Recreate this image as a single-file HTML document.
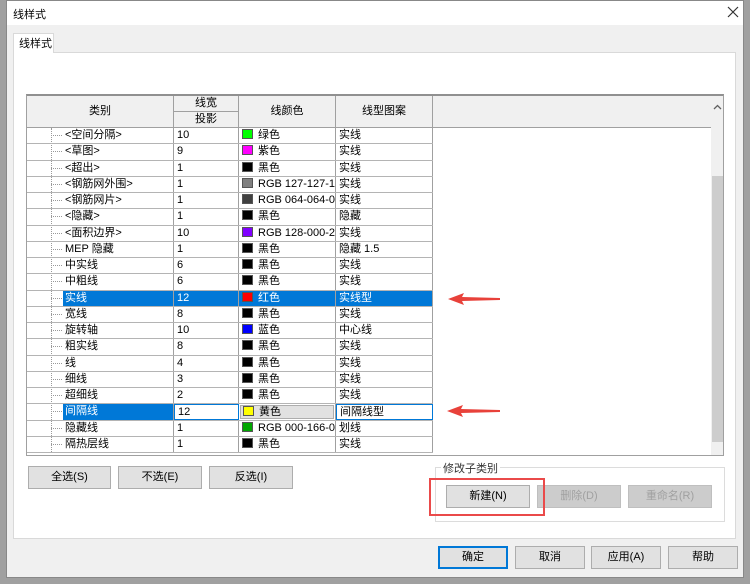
<!DOCTYPE html>
<html><head><meta charset="utf-8"><style>
*{box-sizing:border-box;margin:0;padding:0}
body{width:750px;height:584px;background:#a0a0a0;font-family:"Liberation Sans","Noto Sans CJK SC",sans-serif;font-size:11px;color:#000;position:relative;overflow:hidden}
.abs{position:absolute}
.win{left:6px;top:0;width:738px;height:578px;background:#f0f0f0;border:1px solid #888}
.title{left:7px;top:1px;width:736px;height:24px;background:#fff}
.panel{left:13px;top:52px;width:723px;height:487px;background:#fff;border:1px solid #d9d9d9}
.tab{left:13px;top:33px;width:41px;height:20px;background:#fff;border:1px solid #d9d9d9;border-bottom:none;padding:1px 0 0 5px}
.grid{left:26px;top:94px;width:698px;height:362px;border:1px solid #a0a0a0;border-top:2px solid #909090;background:#fff;overflow:hidden}
.hd{position:absolute;top:0;height:32px;background:#f0f0f0;border-right:1px solid #a0a0a0;border-bottom:1px solid #a0a0a0;text-align:center}
.row{position:absolute;left:0;width:406px;height:16.25px;border-bottom:1px solid #b4b4b4}
.c{position:absolute;top:0;height:100%;border-right:1px solid #a0a0a0;line-height:15px;white-space:nowrap;overflow:hidden;padding-left:3px}
.c0{left:0;width:147px;padding-left:38px}
.c1{left:147px;width:65px}
.c2{left:212px;width:97px}
.c3{left:309px;width:97px}
.dots{position:absolute;left:24px;top:7px;width:11px;border-top:1px dotted #999}
.sw{display:inline-block;width:11px;height:10px;vertical-align:-1px;margin-right:5px;border:1px solid #555}
.sel .c0 span,.sel .c1,.sel .c2,.sel .c3{background:#0078d7;color:#fff}
.btn{position:absolute;height:23px;background:#e1e1e1;border:1px solid #adadad;text-align:center;line-height:21px;font-size:11px}
.dis{color:#a0a0a0;background:#ccc;border-color:#bfbfbf}
</style></head><body>
<div class="abs win"></div>
<div class="abs title"></div>
<div class="abs" style="left:13px;top:6px;font-size:11px">线样式</div>
<svg class="abs" style="left:727px;top:6px" width="12" height="12"><path d="M1 1L11 11M11 1L1 11" stroke="#333" stroke-width="1.2"/></svg>
<div class="abs panel"></div>
<div class="abs tab">线样式</div>
<div class="abs grid">
 <div class="hd" style="left:0;width:147px;line-height:30px">类别</div>
 <div class="hd" style="left:147px;width:65px;height:16px;line-height:15px">线宽</div>
 <div class="hd" style="left:147px;top:16px;width:65px;height:16px;line-height:15px">投影</div>
 <div class="hd" style="left:212px;width:97px;line-height:30px">线颜色</div>
 <div class="hd" style="left:309px;width:97px;line-height:30px">线型图案</div>
 <div class="hd" style="left:406px;width:278px;border-right:none"></div>
 <div class="abs" style="left:684px;top:0;width:13px;height:360px;background:#f0f0f0"></div>
 <svg class="abs" style="left:686px;top:8px" width="9" height="6"><path d="M1 5L4.5 1.5L8 5" stroke="#606060" fill="none" stroke-width="1.3"/></svg>
 <div class="abs" style="left:685px;top:80px;width:11px;height:266px;background:#cdcdcd"></div>
 <div class="abs" style="left:24px;top:32px;height:324px;border-left:1px dotted #999"></div>
 <div style="position:absolute;left:0;top:32px">
 <div class="row" style="top:0"><div class="dots"></div><div class="c c0">&lt;空间分隔&gt;</div><div class="c c1">10</div><div class="c c2"><i class="sw" style="background:#0f0"></i>绿色</div><div class="c c3">实线</div></div>
 <div class="row" style="top:16.25px"><div class="dots"></div><div class="c c0">&lt;草图&gt;</div><div class="c c1">9</div><div class="c c2"><i class="sw" style="background:#f0f"></i>紫色</div><div class="c c3">实线</div></div>
 <div class="row" style="top:32.5px"><div class="dots"></div><div class="c c0">&lt;超出&gt;</div><div class="c c1">1</div><div class="c c2"><i class="sw" style="background:#000"></i>黑色</div><div class="c c3">实线</div></div>
 <div class="row" style="top:48.75px"><div class="dots"></div><div class="c c0">&lt;钢筋网外围&gt;</div><div class="c c1">1</div><div class="c c2"><i class="sw" style="background:#7f7f7f"></i>RGB 127-127-127</div><div class="c c3">实线</div></div>
 <div class="row" style="top:65px"><div class="dots"></div><div class="c c0">&lt;钢筋网片&gt;</div><div class="c c1">1</div><div class="c c2"><i class="sw" style="background:#404040"></i>RGB 064-064-064</div><div class="c c3">实线</div></div>
 <div class="row" style="top:81.25px"><div class="dots"></div><div class="c c0">&lt;隐藏&gt;</div><div class="c c1">1</div><div class="c c2"><i class="sw" style="background:#000"></i>黑色</div><div class="c c3">隐藏</div></div>
 <div class="row" style="top:97.5px"><div class="dots"></div><div class="c c0">&lt;面积边界&gt;</div><div class="c c1">10</div><div class="c c2"><i class="sw" style="background:#8000ff"></i>RGB 128-000-255</div><div class="c c3">实线</div></div>
 <div class="row" style="top:113.75px"><div class="dots"></div><div class="c c0">MEP 隐藏</div><div class="c c1">1</div><div class="c c2"><i class="sw" style="background:#000"></i>黑色</div><div class="c c3">隐藏 1.5</div></div>
 <div class="row" style="top:130px"><div class="dots"></div><div class="c c0">中实线</div><div class="c c1">6</div><div class="c c2"><i class="sw" style="background:#000"></i>黑色</div><div class="c c3">实线</div></div>
 <div class="row" style="top:146.25px"><div class="dots"></div><div class="c c0">中粗线</div><div class="c c1">6</div><div class="c c2"><i class="sw" style="background:#000"></i>黑色</div><div class="c c3">实线</div></div>
 <div class="row sel" style="top:162.5px"><div class="dots"></div><div class="c c0" style="padding-left:36px"><span style="display:block;height:100%;padding-left:2px">实线</span></div><div class="c c1">12</div><div class="c c2"><i class="sw" style="background:#f00"></i>红色</div><div class="c c3">实线型</div></div>
 <div class="row" style="top:178.75px"><div class="dots"></div><div class="c c0">宽线</div><div class="c c1">8</div><div class="c c2"><i class="sw" style="background:#000"></i>黑色</div><div class="c c3">实线</div></div>
 <div class="row" style="top:195px"><div class="dots"></div><div class="c c0">旋转轴</div><div class="c c1">10</div><div class="c c2"><i class="sw" style="background:#00f"></i>蓝色</div><div class="c c3">中心线</div></div>
 <div class="row" style="top:211.25px"><div class="dots"></div><div class="c c0">粗实线</div><div class="c c1">8</div><div class="c c2"><i class="sw" style="background:#000"></i>黑色</div><div class="c c3">实线</div></div>
 <div class="row" style="top:227.5px"><div class="dots"></div><div class="c c0">线</div><div class="c c1">4</div><div class="c c2"><i class="sw" style="background:#000"></i>黑色</div><div class="c c3">实线</div></div>
 <div class="row" style="top:243.75px"><div class="dots"></div><div class="c c0">细线</div><div class="c c1">3</div><div class="c c2"><i class="sw" style="background:#000"></i>黑色</div><div class="c c3">实线</div></div>
 <div class="row" style="top:260px"><div class="dots"></div><div class="c c0">超细线</div><div class="c c1">2</div><div class="c c2"><i class="sw" style="background:#000"></i>黑色</div><div class="c c3">实线</div></div>
 <div class="row" style="top:276.25px"><div class="dots"></div><div class="c c0" style="padding-left:36px"><span style="display:block;height:100%;padding-left:2px;background:#0078d7;color:#fff">间隔线</span></div><div class="c c1" style="border:1px solid #0078d7">12</div><div class="c c2" style="padding:1px"><div style="background:#e1e1e1;border:1px solid #adadad;height:100%;padding-left:2px;line-height:12px"><i class="sw" style="background:#ff0"></i>黄色</div></div><div class="c c3" style="border:1px solid #0078d7">间隔线型</div></div>
 <div class="row" style="top:292.5px"><div class="dots"></div><div class="c c0">隐藏线</div><div class="c c1">1</div><div class="c c2"><i class="sw" style="background:#00a600"></i>RGB 000-166-000</div><div class="c c3">划线</div></div>
 <div class="row" style="top:308.75px"><div class="dots"></div><div class="c c0">隔热层线</div><div class="c c1">1</div><div class="c c2"><i class="sw" style="background:#000"></i>黑色</div><div class="c c3">实线</div></div>
 </div>
</div>
<svg class="abs" style="left:446px;top:290px" width="56" height="130">
 <polygon points="2,9 18,3 16,7 54,8 54,10 16,11 18,15" fill="#e8413a"/>
 <polygon points="1,121 17,115 15,119 54,120 54,122 15,123 17,127" fill="#e8413a"/>
</svg>
<div class="btn" style="left:28px;top:466px;width:83px">全选(S)</div>
<div class="btn" style="left:118px;top:466px;width:84px">不选(E)</div>
<div class="btn" style="left:209px;top:466px;width:84px">反选(I)</div>
<div class="abs" style="left:435px;top:467px;width:290px;height:55px;border:1px solid #dcdcdc"></div>
<div class="abs" style="left:441px;top:460px;background:#fff;padding:0 2px;color:#333">修改子类别</div>
<div class="btn" style="left:446px;top:485px;width:84px">新建(N)</div>
<div class="btn dis" style="left:537px;top:485px;width:84px">删除(D)</div>
<div class="btn dis" style="left:628px;top:485px;width:84px">重命名(R)</div>
<div class="abs" style="left:429px;top:478px;width:116px;height:38px;border:2px solid #ea4a4a"></div>
<div class="btn" style="left:438px;top:546px;width:70px;border:2px solid #0078d7;line-height:19px">确定</div>
<div class="btn" style="left:515px;top:546px;width:70px">取消</div>
<div class="btn" style="left:591px;top:546px;width:70px">应用(A)</div>
<div class="btn" style="left:668px;top:546px;width:70px">帮助</div>
</body></html>
